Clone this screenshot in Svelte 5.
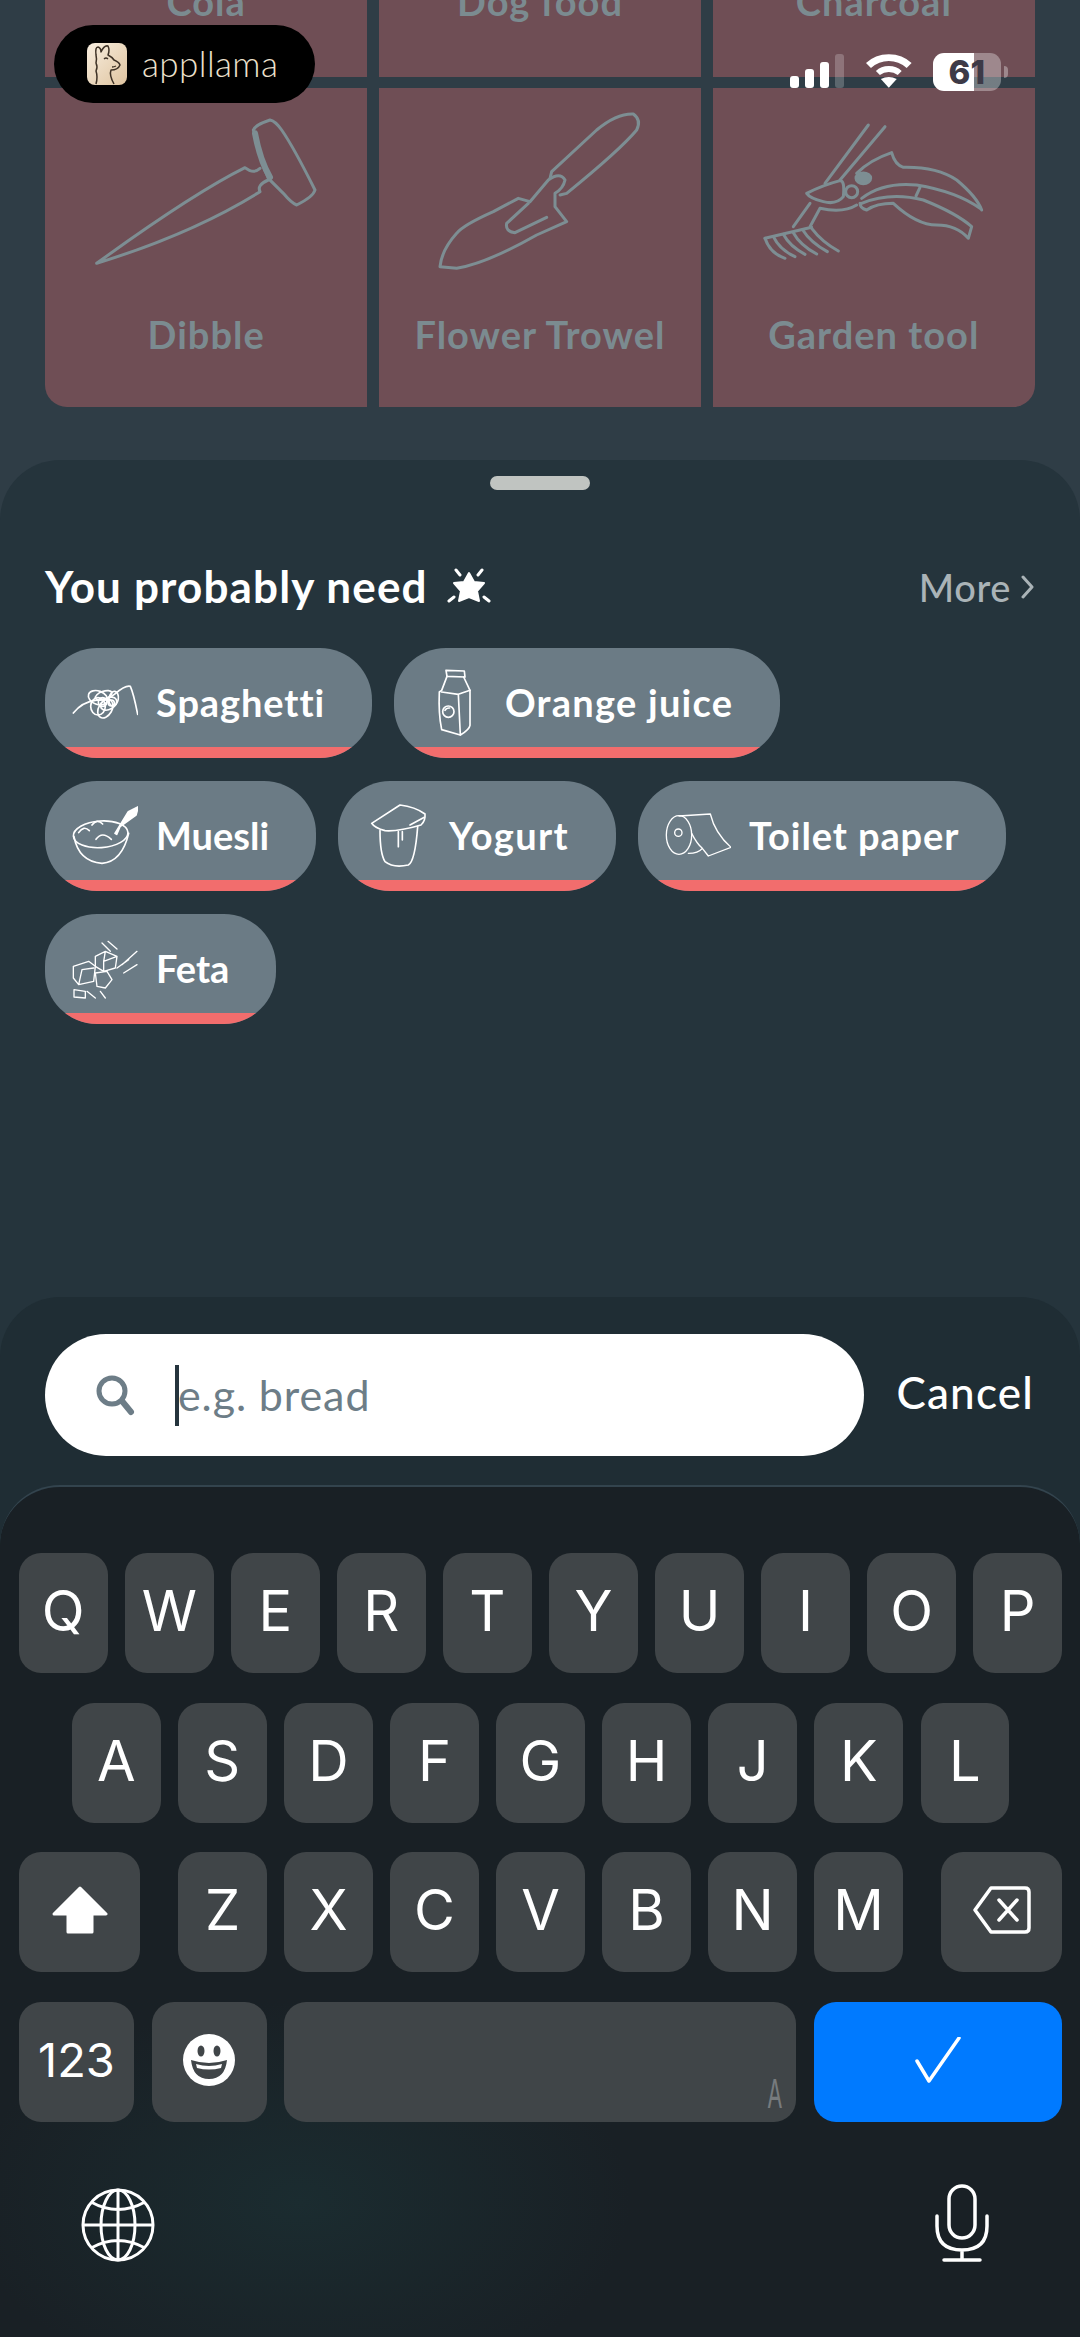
<script>
  const row1 = ['Q','W','E','R','T','Y','U','I','O','P'];
  const row2 = ['A','S','D','F','G','H','J','K','L'];
  const row3 = ['Z','X','C','V','B','N','M'];
</script>

<div class="screen">
  <section class="grid">
    <div class="cell"><div class="art"></div><div class="label">Cola</div></div>
    <div class="cell"><div class="art"></div><div class="label">Dog food</div></div>
    <div class="cell"><div class="art"></div><div class="label">Charcoal</div></div>

    <div class="cell bl">
      <div class="art">
        <svg class="dibble" width="300" height="190" viewBox="0 0 900 570">
          <path d="M580 90 Q585 75 630 60 Q645 62 665 90 Q700 140 765 270 Q760 290 710 315 Q695 310 670 280 L625 235 Q600 180 580 90 Z"/>
          <path class="thick" d="M585 100 Q600 180 630 232"/>
          <path d="M600 205 Q585 218 570 212 L555 203 Q400 280 110 490 Q400 400 600 275 Q590 255 625 240"/>
        </svg>
      </div>
      <div class="label">Dibble</div>
    </div>
    <div class="cell">
      <div class="art">
        <svg class="trowel" width="250" height="190" viewBox="0 0 750 570">
          <path d="M390 235 L395 215 L530 90 Q590 40 640 42 Q665 60 650 90 Q600 150 440 280 L420 285"/>
          <path d="M60 500 Q65 450 110 400 Q130 375 220 335 L295 295 L330 305 L385 240 Q420 215 435 240 Q430 265 405 280 L405 320 L440 365 L350 405 Q200 490 110 505 Z"/>
          <path d="M325 310 L260 370 Q255 395 285 398 L380 352"/>
        </svg>
      </div>
      <div class="label">Flower Trowel</div>
    </div>
    <div class="cell br">
      <div class="art">
        <svg class="tool" width="250" height="170" viewBox="0 0 750 510">
          <path d="M225 220 L355 45 M270 210 L405 50"/>
          <path d="M170 250 Q220 225 270 212 Q285 210 280 260 Q260 285 220 275 Q180 265 170 250Z"/>
          <circle cx="305" cy="245" r="18"/>
          <path d="M320 190 Q360 150 425 128 Q435 165 460 172 Q560 170 620 210 Q680 260 695 300"/>
          <path d="M335 265 Q400 215 500 225 Q620 245 690 295"/>
          <path d="M335 280 Q420 245 520 270 Q620 310 665 350 L655 385 Q620 345 560 345 Q500 345 430 280 Q380 280 350 300 Q330 295 330 280"/>
          <path d="M510 232 L498 258 M210 295 Q280 310 320 285 M180 280 L130 350 M210 295 L180 350 M45 385 L185 352"/>
          <path d="M45 385 Q60 430 105 445 M70 380 Q90 420 135 440 M100 373 Q120 410 165 433 M130 368 Q150 405 200 432 M160 362 Q180 395 232 425 M185 355 Q215 395 265 423"/>
          <ellipse class="solid" cx="340" cy="205" rx="22" ry="16"/>
        </svg>
      </div>
      <div class="label">Garden tool</div>
    </div>
  </section>

  <section class="sheet">
    <div class="handle"></div>
    <div class="heading">
      <h2><span>You probably need</span>
        <svg class="star" width="46" height="40" viewBox="0 0 46 40">
          <path fill="#fff" d="M23 5 L28 14 L38 15 L31 23 L33 33 L23 29 L13 33 L15 23 L8 15 L18 14 Z" stroke="#fff" stroke-width="2" stroke-linejoin="round"/>
          <path fill="none" stroke="#fff" stroke-width="3" stroke-linecap="round" d="M10 2 L14 7 M36 2 L32 7 M3 33 L8 29 M43 33 L38 29"/>
        </svg>
      </h2>
      <div class="more">More
        <svg width="14" height="24" viewBox="0 0 14 24"><path d="M2 2 L11 12 L2 22" fill="none" stroke="#aab3b7" stroke-width="3" stroke-linecap="round" stroke-linejoin="round"/></svg>
      </div>
    </div>

    <div class="pills">
      <div class="pill">
        <svg class="pi" viewBox="0 0 198 270">
          <path d="M4 168 Q30 135 70 130 Q110 128 130 110 Q160 84 175 88 Q185 110 197 172"/>
          <ellipse cx="78" cy="122" rx="30" ry="20" transform="rotate(20 78 122)"/>
          <ellipse cx="110" cy="140" rx="26" ry="17" transform="rotate(-30 110 140)"/>
          <ellipse cx="78" cy="148" rx="22" ry="26"/>
          <ellipse cx="100" cy="155" rx="20" ry="30" transform="rotate(30 100 155)"/>
          <ellipse cx="125" cy="125" rx="14" ry="22" transform="rotate(10 125 125)"/>
          <ellipse cx="95" cy="115" rx="26" ry="12" transform="rotate(-20 95 115)"/>
          <circle cx="92" cy="135" r="13"/>
          <circle cx="118" cy="138" r="9"/>
        </svg>
        <span>Spaghetti</span>
      </div>
      <div class="pill">
        <svg class="pi" viewBox="0 0 198 270">
          <path d="M75 40 L130 42 L132 60 L78 58 Z"/>
          <path d="M78 58 L62 100 L55 105 Q52 170 62 218 L118 234 Q145 218 147 205 L147 100 L128 60"/>
          <path d="M62 105 L112 112 L118 234 M112 112 L147 100"/>
          <circle cx="82" cy="164" r="17"/>
          <path d="M72 160 Q76 152 86 153"/>
        </svg>
        <span class="wide">Orange juice</span>
      </div>
      <div class="pill">
        <svg class="pi" viewBox="0 0 198 270">
          <ellipse cx="86" cy="133" rx="82" ry="40" transform="rotate(-4 86 133)"/>
          <path d="M6 140 Q20 215 90 220 Q150 215 170 130"/>
          <path d="M20 128 Q35 105 52 122 M60 105 Q75 85 92 102 M72 148 Q90 122 118 148"/>
          <path class="f" d="M129 130 L169 65 L199 50 L192 75 L144 110 L134 133 Z"/>
        </svg>
        <span class="tight">Muesli</span>
      </div>
      <div class="pill">
        <svg class="pi" viewBox="0 0 198 270">
          <path d="M20 100 L105 45 Q150 50 180 72 Q182 92 168 105 Q100 125 60 122 Q30 115 20 100Z"/>
          <path d="M45 122 Q45 190 60 215 Q85 235 130 225 Q150 215 158 110"/>
          <path d="M100 125 L100 170 M112 125 L112 150 M135 105 L178 82"/>
        </svg>
        <span class="wider">Yogurt</span>
      </div>
      <div class="pill">
        <svg class="pi thin" viewBox="0 0 198 270">
          <ellipse cx="42" cy="135" rx="38" ry="58"/>
          <circle cx="40" cy="128" r="11"/>
          <path d="M42 78 L136 72 Q150 130 198 172 L130 198 L112 175 M80 130 Q95 160 112 175 Q100 190 70 190"/>
        </svg>
        <span>Toilet paper</span>
      </div>
      <div class="pill">
        <svg class="pi thin" viewBox="0 0 198 270">
          <path d="M70 100 L100 85 L135 100 L130 135 L95 145 L70 130 Z M100 85 L95 115 L135 100 M95 115 L95 145"/>
          <path d="M4 130 L50 115 L70 130 L65 175 L20 185 L4 165 Z M30 140 L65 135 M30 140 L20 185"/>
          <path d="M70 150 L105 145 L120 170 L100 195 L75 190 Z M70 225 L45 205 M85 205 L100 225"/>
          <path d="M115 85 L90 60 M135 78 L108 55 M150 125 L195 85 M155 150 L195 125 M135 135 L170 110"/>
          <path d="M6 200 L40 205 L40 225 L6 222 Z"/>
        </svg>
        <span class="tight">Feta</span>
      </div>
    </div>

    <div class="footer">
      <div class="search">
        <div class="input">
          <svg width="40" height="42" viewBox="0 0 40 42"><circle cx="17" cy="17" r="13" fill="none" stroke="#6d7d87" stroke-width="5"/><path d="M27 27 L36 38" stroke="#6d7d87" stroke-width="6" stroke-linecap="round"/></svg>
          <i class="caret"></i>
          <span>e.g. bread</span>
        </div>
        <div class="cancel">Cancel</div>
      </div>

      <div class="keyboard">
        <div class="row">{#each row1 as k}<div class="key">{k}</div>{/each}</div>
        <div class="row r2">{#each row2 as k}<div class="key">{k}</div>{/each}</div>
        <div class="row">
          <div class="key shift">
            <svg width="56" height="48" viewBox="0 0 56 48"><path fill="#fff" stroke="#fff" stroke-width="3" stroke-linejoin="round" d="M28 2 L54 28 L40 28 L40 46 L16 46 L16 28 L2 28 Z"/></svg>
          </div>
          <div class="letters">{#each row3 as k}<div class="key">{k}</div>{/each}</div>
          <div class="key shift">
            <svg width="58" height="48" viewBox="0 0 58 48"><path fill="none" stroke="#fff" stroke-width="3.5" stroke-linejoin="round" d="M18 2 H52 Q56 2 56 6 V42 Q56 46 52 46 H18 L2 24 Z"/><path fill="none" stroke="#fff" stroke-width="3.5" stroke-linecap="round" d="M26 14 L44 34 M44 14 L26 34"/></svg>
          </div>
        </div>
        <div class="row">
          <div class="key num">123</div>
          <div class="key num">
            <svg width="54" height="54" viewBox="0 0 54 54"><circle cx="27" cy="27" r="26" fill="#fff"/><ellipse cx="19" cy="18" rx="3.5" ry="5.5" fill="#404548"/><ellipse cx="35" cy="18" rx="3.5" ry="5.5" fill="#404548"/><path fill="#404548" d="M9 27 Q27 33 45 27 Q43 46 27 46 Q11 46 9 27Z"/><path fill="#fff" d="M14 31 Q27 35 40 31 L39 35 Q27 38 15 35 Z"/></svg>
          </div>
          <div class="key space"><span>A</span></div>
          <div class="key go">
            <svg width="46" height="46" viewBox="0 0 46 46"><path fill="none" stroke="#fff" stroke-width="3.5" stroke-linecap="round" stroke-linejoin="round" d="M2 24 L14 44 L44 1"/></svg>
          </div>
        </div>
        <div class="bottom">
          <svg class="globe" width="74" height="76" viewBox="0 0 74 76" fill="none" stroke="#fff" stroke-width="3">
            <circle cx="37" cy="38" r="35"/>
            <ellipse cx="37" cy="38" rx="17" ry="35"/>
            <path d="M37 3 V73 M2 38 H72 M10 15 Q37 30 64 15 M10 61 Q37 46 64 61"/>
          </svg>
          <svg width="54" height="78" viewBox="0 0 54 78" fill="none" stroke="#fff" stroke-width="3.5" stroke-linecap="round">
            <rect x="14" y="2" width="26" height="52" rx="13"/>
            <path d="M2 32 V42 Q2 66 27 66 Q52 66 52 42 V32 M27 66 V75 M9 76 H45" />
          </svg>
        </div>
      </div>
    </div>
  </section>

  <div class="badge">
    <svg width="40" height="42" viewBox="0 0 40 42">
      <defs><linearGradient id="g" x1="0" y1="0" x2="1" y2="1"><stop offset="0" stop-color="#f8eedf"/><stop offset="1" stop-color="#dfc4a0"/></linearGradient></defs>
      <rect width="40" height="42" rx="8" fill="url(#g)"/>
      <path d="M9 41 Q11 34 9 28 Q11 24 9 20 Q10 16 9 12 Q8 4 11 4 Q14 5 14 9 Q17 2 21 3 Q23 7 21 12 Q25 14 27 17 Q32 19 33 22 Q31 27 24 27 Q22 32 27 41" fill="none" stroke="#3e3226" stroke-width="1.5" stroke-linejoin="round"/>
      <path d="M17 16 Q19 14 21 16 M25 24 Q27 24 29 23" fill="none" stroke="#3e3226" stroke-width="1.3"/>
    </svg>
    <span>appllama</span>
  </div>

  <div class="status">
    <div class="bars"><i class="b1"></i><i class="b2"></i><i class="b3"></i><i class="b4"></i></div>
    <svg class="wifi" width="46" height="34" viewBox="0 0 46 34">
      <path fill="#fff" d="M23 0 Q37 0 46 9 L41 14 Q33 7 23 7 Q13 7 5 14 L0 9 Q9 0 23 0Z"/>
      <path fill="#fff" d="M23 12 Q31 12 36 17 L32 21 Q28 18 23 18 Q18 18 14 21 L10 17 Q15 12 23 12Z"/>
      <path fill="#fff" d="M15 25 Q19 23 23 23 Q27 23 31 25 L23 34 Z"/>
    </svg>
    <div class="battery"><b>61</b></div>
    <i class="nub"></i>
  </div>
</div>

<style>
  :global(body) { margin: 0; background: #2f3d46; }
  .screen {
    position: relative;
    width: 1080px;
    height: 2337px;
    overflow: hidden;
    background: #2f3d46;
    display: flex;
    flex-direction: column;
    font-family: "Lato", "Open Sans", sans-serif;
    color: #fff;
  }
  .grid {
    margin-top: -245px;
    padding: 0 45px;
    display: grid;
    grid-template-columns: repeat(3, 1fr);
    grid-template-rows: 322px 319px;
    gap: 11px 11.5px;
    flex: none;
  }
  .cell { background: #6f4e55; }
  .bl { border-bottom-left-radius: 22px; }
  .br { border-bottom-right-radius: 22px; }
  .art { height: 212px; display: flow-root; }
  .art svg { display: block; fill: none; stroke: #7d8e93; stroke-width: 9; stroke-linecap: round; stroke-linejoin: round; }
  .art .thick { stroke-width: 18; }
  .art .solid { fill: #7d8e93; }
  .dibble { margin: 12px 0 0 15px; }
  .trowel { margin: 12px 0 0 41px; }
  .tool { margin: 22px 0 0 37px; }
  .label {
    height: 70px;
    line-height: 70px;
    text-align: center;
    font-size: 38px;
    letter-spacing: 1px;
    font-weight: 700;
    color: #7b8b90;
    margin-top: -1px;
  }
  .sheet {
    margin-top: 53px;
    flex: 1;
    background: #25343c;
    border-radius: 60px 60px 0 0;
    display: flex;
    flex-direction: column;
    padding-top: 16px;
    min-height: 0;
  }
  .handle { width: 100px; height: 14px; border-radius: 7px; background: #c0c4c1; margin: 0 auto; flex: none; }
  .heading {
    margin-top: 73px;
    height: 50px;
    padding: 0 45px;
    display: flex;
    justify-content: space-between;
    align-items: center;
  }
  h2 { margin: 0; font-size: 44px; font-weight: 700; letter-spacing: 1.15px; display: flex; align-items: center; gap: 18px; }
  h2 span { margin-top: -4px; }
  .more { font-size: 38px; letter-spacing: .6px; color: #aab3b7; display: flex; align-items: center; gap: 10px; font-weight: 500; margin-top: -3px; }
  .pills {
    margin-top: 35px;
    padding: 0 45px;
    display: flex;
    flex-wrap: wrap;
    gap: 23px 22px;
  }
  .pill {
    position: relative;
    overflow: hidden;
    height: 110px;
    border-radius: 52px;
    background: #6b7b85;
    display: flex;
    align-items: center;
    padding: 0 47px 0 27px;
    gap: 18px;
    font-size: 38px;
    letter-spacing: .9px;
    font-weight: 700;
    box-sizing: border-box;
  }
  .pill::after { content: ""; position: absolute; left: 0; right: 0; bottom: 0; height: 11px; background: #f26d6d; }
  .pi { width: 66px; height: 90px; margin-bottom: 2px; fill: none; stroke: #fff; stroke-width: 5; stroke-linecap: round; stroke-linejoin: round; flex: none; }
  .pi.thin { stroke-width: 4; }
  .pi .f { fill: #fff; }
  .pill span { margin-bottom: 2px; }
  .pill .tight { letter-spacing: 0; }
  .pill .wide { letter-spacing: 1.25px; }
  .pill .wider { letter-spacing: 1.35px; }
  .footer {
    margin-top: auto;
    height: 1040px;
    background: #1f2d34;
    border-radius: 60px 60px 0 0;
    display: flex;
    flex-direction: column;
    padding-top: 37px;
    box-sizing: border-box;
  }
  .search { display: flex; align-items: center; padding: 0 46px 0 45px; justify-content: space-between; }
  .input {
    width: 819px;
    height: 122px;
    border-radius: 61px;
    background: #fff;
    display: flex;
    align-items: center;
    box-sizing: border-box;
    padding-left: 50px;
  }
  .caret { width: 4px; height: 61px; background: #25343d; margin-left: 40px; flex: none; }
  .input span { font-size: 43px; letter-spacing: .9px; color: #6d7d87; margin: -2px 0 0 -1px; }
  .cancel { font-size: 44px; letter-spacing: 1.2px; font-weight: 500; margin-top: -6px; }
  .keyboard {
    margin-top: 29px;
    flex: 1;
    border-radius: 60px 60px 0 0;
    border-top: 2px solid #33444e;
    box-sizing: border-box;
    padding: 66px 18px 0 19px;
    background:
      radial-gradient(ellipse 330px 200px at 300px 715px, #1b2c30 0%, rgba(27,44,48,0) 100%),
      #192025;
    display: flex;
    flex-direction: column;
    gap: 29.5px;
    font-family: "Inter", "Roboto", sans-serif;
  }
  .row { display: flex; justify-content: space-between; height: 120px; flex: none; }
  .r2 { padding: 0 53px; }
  .letters { display: flex; gap: 17.5px; }
  .key {
    width: 88.5px;
    height: 120px;
    border-radius: 22px;
    background: #404548;
    display: flex;
    align-items: center;
    justify-content: center;
    font-size: 56px;
    padding-bottom: 4px;
    box-sizing: border-box;
    flex: none;
  }
  .shift { width: 121px; }
  .num { width: 115px; font-size: 47px; }
  .space { width: 512px; position: relative; }
  .space span { position: absolute; right: 8px; bottom: 4px; font-size: 40px; color: #777b7e; transform: scaleX(0.55); }
  .go { width: 248px; background: #007aff; }
  .bottom {
    display: flex;
    justify-content: space-between;
    padding: 33px 73px 0 62px;
    align-items: flex-start;
  }
  .globe { margin-top: 3px; }
  .badge {
    position: absolute;
    left: 54px;
    top: 25px;
    width: 261px;
    height: 78px;
    border-radius: 39px;
    background: #000;
    display: flex;
    align-items: center;
    gap: 15px;
    padding-left: 33px;
    box-sizing: border-box;
  }
  .badge span { font-family: "Lato", sans-serif; font-weight: 300; font-size: 35px; letter-spacing: .4px; color: #ece0cd; margin-top: -2px; }
  .status {
    position: absolute;
    left: 790px;
    top: 53px;
    width: 218px;
    height: 38px;
    display: flex;
    align-items: flex-end;
  }
  .bars { display: flex; gap: 6px; align-items: flex-end; height: 34px; margin-bottom: 3px; }
  .bars i { display: block; width: 9px; background: #fff; border-radius: 3px; }
  .b1 { height: 12px; }
  .b2 { height: 19px; }
  .b3 { height: 26px; }
  .bars .b4 { height: 34px; background: rgba(255,255,255,.22); }
  .wifi { margin: 0 0 3px 22px; }
  .battery {
    margin-left: 21px;
    width: 69px;
    height: 38px;
    border-radius: 11px;
    background: linear-gradient(90deg, #fff 0 61%, rgba(255,255,255,.33) 61% 100%);
    display: flex;
    align-items: center;
    justify-content: center;
    color: #3d3a47;
    font-family: "Inter", sans-serif;
    font-size: 33px;
  }
  .battery b { font-weight: 800; }
  .nub { width: 4px; height: 12px; margin: 0 0 13px 3px; background: rgba(255,255,255,.33); border-radius: 0 4px 4px 0; }
</style>
